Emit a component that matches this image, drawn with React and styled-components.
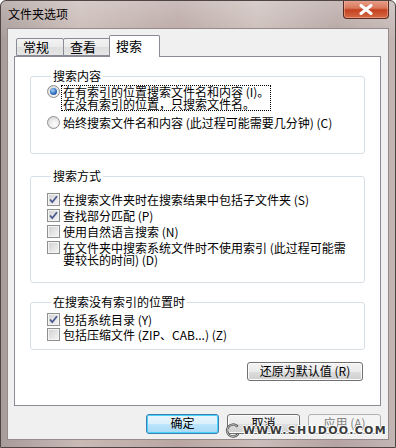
import styled, { createGlobalStyle } from 'styled-components';

const Global = createGlobalStyle`
    html, body {
        margin: 0;
        padding: 0;
        background: #ffffff;
    }
    body {
        font-family: "Noto Sans CJK SC", "Liberation Sans", sans-serif;
        font-size: 12px;
        color: #000;
    }
`;

const searchModes = [
    { label: '在搜索文件夹时在搜索结果中包括子文件夹 (S)', checked: true },
    { label: '查找部分匹配 (P)', checked: true },
    { label: '使用自然语言搜索 (N)', checked: false },
    { label: '在文件夹中搜索系统文件时不使用索引 (此过程可能需要较长的时间) (D)', checked: false },
];

const noIndex = [
    { label: '包括系统目录 (Y)', checked: true },
    { label: '包括压缩文件 (ZIP、CAB...) (Z)', checked: false },
];

function Radio(props){
    return (
        <RadioCircle>
            {props.checked && <RadioDot />}
        </RadioCircle>
    );
}

function Check(props){
    return (
        <CheckBox>
            {props.checked && (
                <svg width="11" height="11" viewBox="0 0 11 11">
                    <path d="M2 5.5 L4.3 8.2 L9 2.2" fill="none" stroke="#4a5b8f" strokeWidth="1.8" />
                </svg>
            )}
        </CheckBox>
    );
}

export default function App(){
    return (
        <>
            <Global />
            <Window>
                <TitleBar>
                    <Title>文件夹选项</Title>
                    <CloseBtn>
                        <svg width="14" height="11" viewBox="0 0 14 11">
                            <path d="M2 1.5 L12 9.5 M12 1.5 L2 9.5" stroke="#ffffff" strokeWidth="3" strokeLinecap="round" />
                        </svg>
                    </CloseBtn>
                </TitleBar>
                <Client>
                    <TabStrip>
                        <Tab $w={48}>常规</Tab>
                        <Tab $w={48}>查看</Tab>
                        <Tab $w={51} $active>搜索</Tab>
                    </TabStrip>
                    <Panel>
                        <Group>
                            <Legend>搜索内容</Legend>
                            <Row>
                                <Radio checked />
                                <FocusLabel>
                                    <Line>在有索引的位置搜索文件名和内容 (I)。</Line>
                                    <Line>在没有索引的位置，只搜索文件名。</Line>
                                </FocusLabel>
                            </Row>
                            <Row $gap={6}>
                                <Radio />
                                <Label>始终搜索文件名和内容 (此过程可能需要几分钟) (C)</Label>
                            </Row>
                        </Group>

                        <Group $top={16} $pt={12} $pb={16}>
                            <Legend>搜索方式</Legend>
                            {searchModes.map((m, i) => (
                                <Row key={i} $gap={i === 0 ? 0 : 4}>
                                    <Check checked={m.checked} />
                                    <Label $wrap>{m.label}</Label>
                                </Row>
                            ))}
                        </Group>

                        <Group $top={13} $pt={6} $pb={8}>
                            <Legend>在搜索没有索引的位置时</Legend>
                            {noIndex.map((m, i) => (
                                <Row key={i} $gap={i === 0 ? 0 : 3}>
                                    <Check checked={m.checked} />
                                    <Label>{m.label}</Label>
                                </Row>
                            ))}
                        </Group>

                        <ResetRow>
                            <Button $w={116} $h={19}>还原为默认值 (R)</Button>
                        </ResetRow>
                    </Panel>
                    <ButtonRow>
                        <Button $default>确定</Button>
                        <Button>取消</Button>
                        <Button $disabled>应用 (A)</Button>
                    </ButtonRow>
                </Client>
                <Watermark>
                    <svg width="16" height="16" viewBox="0 0 16 16">
                        <path d="M12 3 A6 6 0 1 0 13 11" fill="none" stroke="#555" strokeWidth="2.4" strokeLinecap="round" />
                        <path d="M12 3 A6 6 0 1 0 13 11" fill="none" stroke="#ddd" strokeWidth="0.8" strokeLinecap="round" />
                    </svg>
                    <WatermarkText>www.shudoo.com</WatermarkText>
                </Watermark>
            </Window>
        </>
    );
}

const Window = styled.div`
    position: relative;
    width: 396px;
    height: 448px;
    box-sizing: border-box;
    display: flex;
    flex-direction: column;
    padding: 0 6px 7px 6px;
    border: 1px solid #4f4544;
    border-radius: 6px 6px 0 0;
    overflow: hidden;
    background:
        linear-gradient(180deg, rgba(255, 255, 255, 0.25), rgba(255, 255, 255, 0) 40px),
        linear-gradient(90deg, #a89b98 0%, #c9bab6 20%, #b9a6a2 45%, #cbbdb9 65%, #b5a4a1 85%, #c2b5b2 100%);
`;

const TitleBar = styled.div`
    height: 27px;
    display: flex;
    align-items: flex-start;
    padding-left: 1px;
`;

const Title = styled.div`
    margin-top: 7px;
    line-height: 12px;
    font-size: 12px;
    color: #000;
`;

const CloseBtn = styled.div`
    margin-left: auto;
    margin-top: -1px;
    width: 46px;
    height: 19px;
    box-sizing: border-box;
    border: 1px solid #5c2a20;
    border-top: none;
    border-radius: 0 0 4px 4px;
    display: flex;
    align-items: center;
    justify-content: center;
    background: linear-gradient(180deg, #e9a48f 0%, #d9785c 45%, #c4411f 55%, #d46a45 100%);
    box-shadow: inset 0 0 0 1px rgba(255, 200, 180, 0.45);
`;

const Client = styled.div`
    flex: 1;
    display: flex;
    flex-direction: column;
    background: #f0f0f0;
    border: 1px solid #958b8a;
    padding: 6px 7px 0 6px;
`;

const TabStrip = styled.div`
    height: 21px;
    display: flex;
    align-items: flex-end;
    padding-left: 2px;
    position: relative;
    z-index: 2;
`;

const Tab = styled.div`
    width: ${p => p.$w}px;
    box-sizing: border-box;
    height: ${p => p.$active ? 22 : 18}px;
    margin-left: ${p => p.$active ? -2 : -1}px;
    margin-bottom: ${p => p.$active ? -1 : 0}px;
    border: 1px solid #898c95;
    border-bottom: ${p => p.$active ? 'none' : '1px solid #898c95'};
    border-radius: 2px 2px 0 0;
    background: ${p => p.$active ? '#ffffff' : 'linear-gradient(180deg, #f3f3f3 0%, #ebebeb 50%, #dedede 51%, #e6e6e6 100%)'};
    font-size: 13px;
    line-height: 16px;
    padding-left: 6px;
    padding-top: ${p => p.$active ? 2 : 0}px;
    &:first-child {
        margin-left: 0;
    }
`;

const Panel = styled.div`
    height: 350px;
    box-sizing: border-box;
    border: 1px solid #898c95;
    background: #ffffff;
    padding: 13px 15px 0 15px;
    display: flex;
    flex-direction: column;
`;

const Group = styled.fieldset`
    margin: ${p => p.$top || 0}px 0 0 0;
    padding: ${p => p.$pt ?? 4}px 0 ${p => p.$pb ?? 24}px 16px;
    border: 1px solid #d5dfe5;
    border-radius: 3px;
    min-width: 0;
`;

const Legend = styled.legend`
    margin-left: 4px;
    padding: 0 2px;
    line-height: 12px;
    font-size: 12px;
    color: #000;
`;

const Row = styled.div`
    display: flex;
    align-items: flex-start;
    gap: 3px;
    margin-top: ${p => p.$gap || 0}px;
`;

const Label = styled.div`
    line-height: 12px;
    font-size: 12px;
    color: #000;
    white-space: ${p => p.$wrap ? 'normal' : 'nowrap'};
    padding-right: 12px;
`;

const FocusLabel = styled.div`
    border: 1px dotted #000;
    padding: 0 1px;
    margin: -1px 0 0 -2px;
    white-space: nowrap;
`;

const Line = styled.div`
    height: 12px;
    line-height: 12px;
    font-size: 12px;
    color: #000;
`;

const RadioCircle = styled.span`
    flex: none;
    width: 13px;
    height: 13px;
    box-sizing: border-box;
    margin-top: -1px;
    border-radius: 50%;
    border: 1px solid #8e8f8f;
    background: radial-gradient(circle at 60% 65%, #ffffff 0%, #e6e6e6 55%, #c8c8c8 100%);
    display: flex;
    align-items: center;
    justify-content: center;
`;

const RadioDot = styled.span`
    width: 7px;
    height: 7px;
    border-radius: 50%;
    background: radial-gradient(circle at 40% 35%, #a9d4f5 0%, #2f6fbf 55%, #1b3f7a 100%);
`;

const CheckBox = styled.span`
    flex: none;
    width: 13px;
    height: 13px;
    box-sizing: border-box;
    margin-top: -1px;
    border: 1px solid #8e8f8f;
    background: linear-gradient(135deg, #cfcfcf 0%, #e3e3e3 50%, #f6f6f6 100%);
    box-shadow: inset 0 0 0 1px #f4f4f4;
    display: flex;
    align-items: center;
    justify-content: center;
`;

const ResetRow = styled.div`
    display: flex;
    justify-content: flex-end;
    margin-top: 12px;
    padding-right: 2px;
`;

const ButtonRow = styled.div`
    display: flex;
    justify-content: flex-end;
    gap: 8px;
    margin-top: 8px;
`;

const Button = styled.div`
    width: ${p => p.$w || 73}px;
    height: ${p => p.$h || 20}px;
    box-sizing: border-box;
    border: 1px solid ${p => p.$default ? '#3c7fb1' : p.$disabled ? '#adb2b5' : '#707070'};
    border-radius: 3px;
    display: flex;
    align-items: center;
    justify-content: center;
    padding-bottom: 2px;
    font-size: 12px;
    line-height: 12px;
    color: ${p => p.$disabled ? '#838383' : '#000'};
    background: ${p => p.$disabled
        ? '#f4f4f4'
        : p.$default
            ? 'linear-gradient(180deg, #eaf6fd 0%, #d9f0fc 50%, #bee6fd 51%, #a7d9f5 100%)'
            : 'linear-gradient(180deg, #f2f2f2 0%, #ebebeb 50%, #dddddd 51%, #cfcfcf 100%)'};
    box-shadow: ${p => p.$default ? 'inset 0 0 0 1px #48d1fa' : p.$disabled ? 'none' : 'inset 0 0 0 1px #fcfcfc'};
`;

const Watermark = styled.div`
    position: absolute;
    right: 8px;
    bottom: 8px;
    display: flex;
    align-items: center;
    gap: 2px;
    pointer-events: none;
`;

const WatermarkText = styled.span`
    font-family: "DejaVu Sans", "Liberation Sans", sans-serif;
    font-weight: bold;
    font-size: 11px;
    letter-spacing: 1.3px;
    text-transform: uppercase;
    color: #3b3b3b;
    text-shadow: 1px 0 0 #fff, -1px 0 0 #fff, 0 1px 0 #fff, 0 -1px 0 #fff;
    line-height: 10px;
`;
